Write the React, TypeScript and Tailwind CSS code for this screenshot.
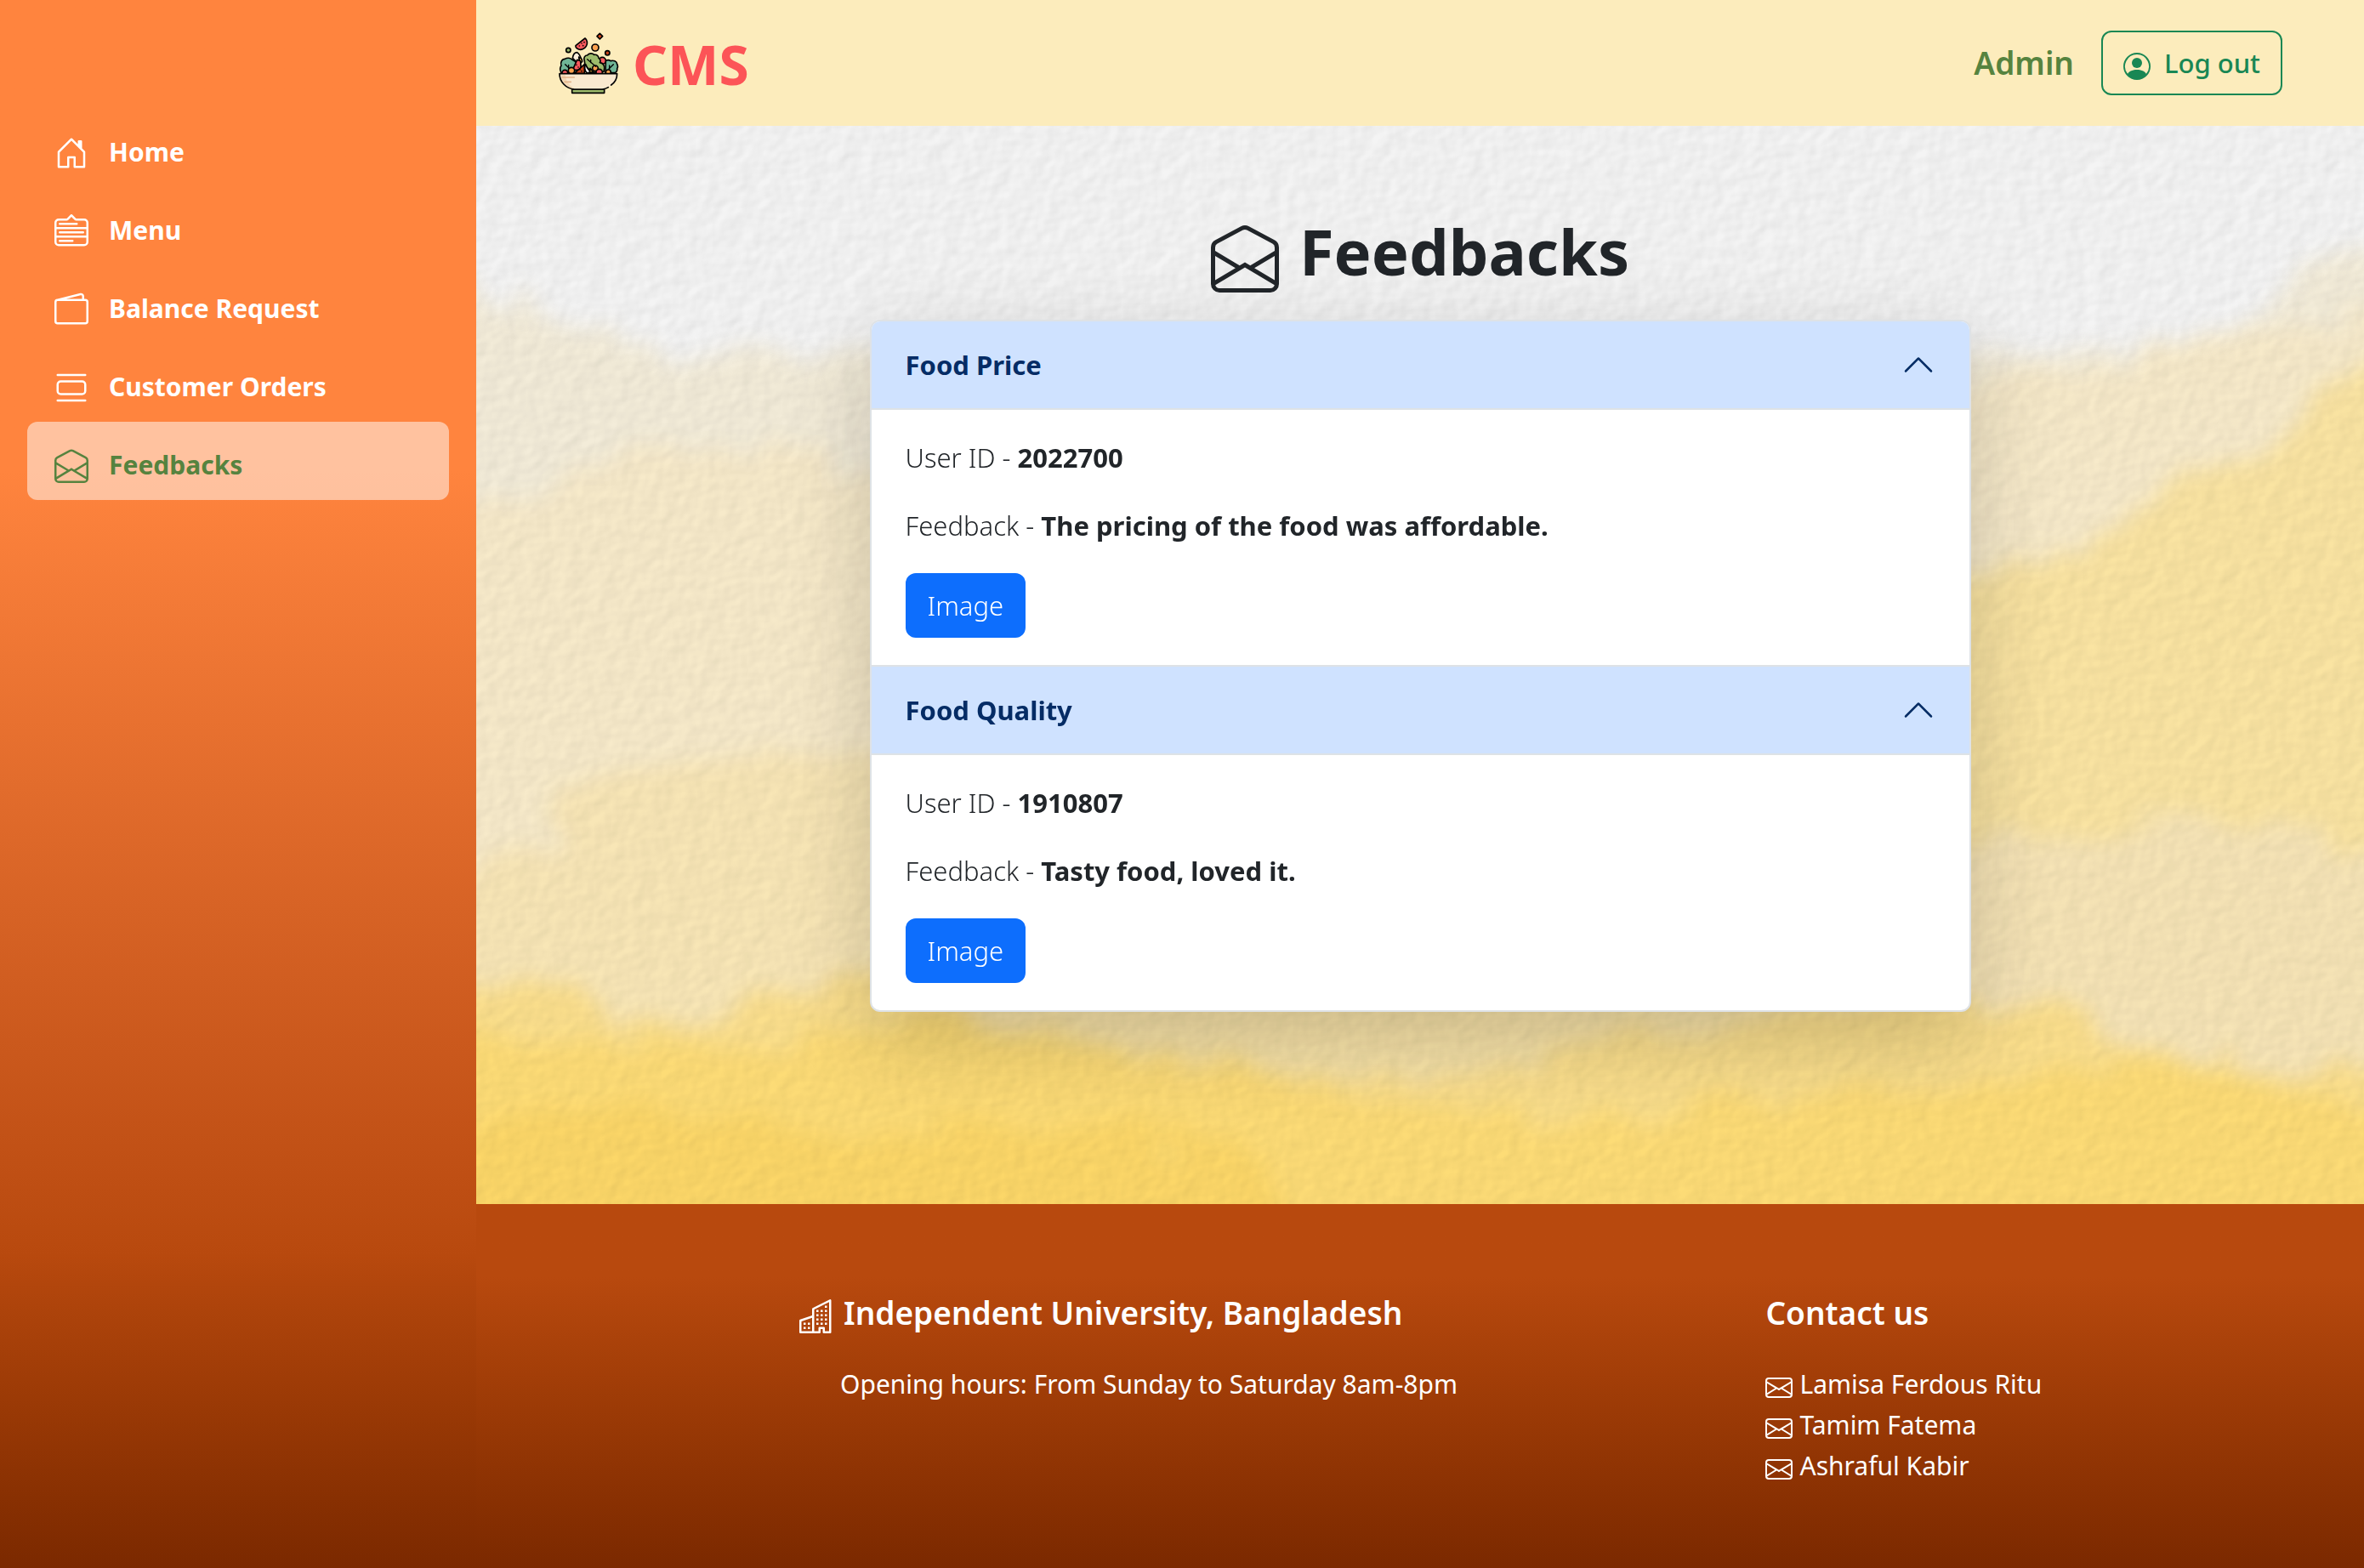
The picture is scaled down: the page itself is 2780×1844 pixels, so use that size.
import { useState } from "react";
import type { ReactNode } from "react";
import type { IconType } from "react-icons";
import {
  BsBuildings,
  BsChevronUp,
  BsEnvelope,
  BsEnvelopeOpen,
  BsMenuDown,
  BsPersonCircle,
  BsWallet2,
} from "react-icons/bs";

function OrdersIcon({ className }: { className?: string }) {
  return (
    <svg viewBox="0 0 16 16" fill="currentColor" className={className} aria-hidden="true">
      <path d="M3 4.5h10a2 2 0 0 1 2 2v3a2 2 0 0 1-2 2H3a2 2 0 0 1-2-2v-3a2 2 0 0 1 2-2m0 1a1 1 0 0 0-1 1v3a1 1 0 0 0 1 1h10a1 1 0 0 0 1-1v-3a1 1 0 0 0-1-1zM1 2a.5.5 0 0 1 .5-.5h13a.5.5 0 0 1 0 1h-13A.5.5 0 0 1 1 2m0 12a.5.5 0 0 1 .5-.5h13a.5.5 0 0 1 0 1h-13A.5.5 0 0 1 1 14" />
    </svg>
  );
}

function HomeIcon({ className }: { className?: string }) {
  return (
    <svg viewBox="0 0 16 16" fill="currentColor" className={className} aria-hidden="true">
      <path d="M8.354 1.146a.5.5 0 0 0-.708 0l-6 6A.5.5 0 0 0 1.5 7.5v7a.5.5 0 0 0 .5.5h4.5a.5.5 0 0 0 .5-.5v-4h2v4a.5.5 0 0 0 .5.5H14a.5.5 0 0 0 .5-.5v-7a.5.5 0 0 0-.146-.354L13 5.793V2.5a.5.5 0 0 0-.5-.5h-1a.5.5 0 0 0-.5.5v1.293zM2.5 14V7.707l5.5-5.5 5.5 5.5V14H10v-4a.5.5 0 0 0-.5-.5h-3a.5.5 0 0 0-.5.5v4z" />
    </svg>
  );
}

function SaladLogo() {
  return (
    <svg viewBox="108 110 216 222" className="h-[74px] w-[72px]" aria-hidden="true">
      <g stroke="#000" strokeWidth="5" strokeLinejoin="round" strokeLinecap="round">
        <path d="M256 117l10 10-10 10-10-10z" fill="#d8481c" />
        <path d="M204 134c8 6 10 18 4 28s-18 14-26 11-12-8-11-13z" fill="#fc5a5f" />
        <circle cx="145" cy="176" r="8" fill="#9dbb6c" />
        <circle cx="240" cy="167" r="12" fill="#fba04e" />
        <circle cx="283" cy="186" r="8" fill="#c8431a" />
        <path d="M120 256c-5-10-4-20 0-25-4-12 2-24 13-24 9-6 20-3 25 2l14 8 4 40z" fill="#6fb596" />
        <path d="M277 214c6-4 14-2 17 0 10-3 22 0 23 11 3 6 3 12 0 16 2 8-4 15-11 15h-30z" fill="#6fb596" />
        <path d="M160 204c2-12 9-20 16-20 6 4 12 14 14 24l-12 14z" fill="#fcefdc" />
        <path d="M182 200c6 2 12 8 12 16l-8 8z" fill="#fbc04a" />
        <circle cx="265" cy="213" r="12" fill="#fc5a5f" />
        <path d="M202 214c-5-12 2-20 10-20 6-8 18-8 24-2 10-2 16 6 16 12 8 5 7 12 4 16 12 1 18 12 16 22l-2 10-40 4-26-26z" fill="#9dbb6c" />
        <path d="M176 210l-16 36h30l-2-32z" fill="#fc5a5f" />
        <path d="M202 226v32h-36z" fill="#c8431a" />
        <path d="M206 226c-5 8-4 22 4 30h24c-14-4-22-14-28-30z" fill="#fff" />
        <path d="M222 240l12 14h-14z" fill="#fbc04a" />
        <circle cx="240" cy="240" r="10" fill="#fba04e" />
        <circle cx="254" cy="254" r="11" fill="#fc5a5f" />
        <circle cx="133" cy="256" r="10" fill="#fc5a5f" />
        <circle cx="156" cy="248" r="11" fill="#fba04e" />
        <circle cx="286" cy="254" r="9" fill="#fba04e" />
        <path d="M134 226l14 14m-2-12v12M212 208l30 26m-18-24v10M304 226l-16 16m2-12v12" fill="none" strokeWidth="4" />
        <path d="M158 314h114v13H158z" fill="#9dbb6c" />
        <path d="M114 259h203c0 26-20 50-52 55H166c-32-5-52-29-52-55z" fill="#fae9d0" stroke="none" />
        <path d="M118 262h16c2 20 12 38 34 50-30-4-50-26-50-50z" fill="#f3d8b4" stroke="none" />
        <path d="M124 272h42M132 288h22" stroke="#e3b48a" />
        <path d="M296 299c14-10 21-24 21-40H114c0 28 22 52 52 55h99c8-1 15-3 21-7" fill="none" />
      </g>
      <g fill="#000">
        <circle cx="192" cy="152" r="2.5" />
        <circle cx="201" cy="148" r="2.5" />
        <circle cx="184" cy="161" r="2.5" />
        <circle cx="197" cy="160" r="2.5" />
        <circle cx="174" cy="228" r="2.5" />
        <circle cx="180" cy="236" r="2.5" />
        <circle cx="186" cy="244" r="2.5" />
        <circle cx="192" cy="250" r="2.5" />
      </g>
    </svg>
  );
}

function WatercolorPaper() {
  return (
    <svg
      viewBox="0 0 2220 1268"
      preserveAspectRatio="none"
      className="absolute inset-0 size-full"
      aria-hidden="true"
    >
      <defs>
        <filter id="wash" x="-5%" y="-5%" width="110%" height="110%" colorInterpolationFilters="sRGB">
          <feTurbulence type="fractalNoise" baseFrequency="0.012 0.02" numOctaves="4" seed="7" result="n" />
          <feDisplacementMap in="SourceGraphic" in2="n" scale="70" xChannelSelector="R" yChannelSelector="G" />
          <feGaussianBlur stdDeviation="12" />
        </filter>
        <filter id="grain" x="0" y="0" width="100%" height="100%" colorInterpolationFilters="sRGB">
          <feTurbulence type="fractalNoise" baseFrequency="0.05 0.06" numOctaves="2" seed="3" />
          <feColorMatrix values="0 0 0 0 0  0 0 0 0 0  0 0 0 0 0  1 0 0 0 0" />
          <feDiffuseLighting surfaceScale="0.4" diffuseConstant="1.13" lightingColor="#ffffff">
            <feDistantLight azimuth="215" elevation="60" />
          </feDiffuseLighting>
        </filter>
      </defs>
      <rect width="2220" height="1268" fill="#f4f4f4" />
      <g filter="url(#wash)">
        <path fill="#f3ecd9" d="M-60 190L85 208l56 33 114 33 99-22 113 33 300 60h700l288-70 114-12 113-4 99-12 14-34 57-39 140-50V1340H-60z" />
        <path fill="#f7eaca" d="M-60 445l110-5 134-54 150-10 200 50h1000l230-120 180-30 140-40 196-30V1340H-60z" />
        <path fill="#fae4a2" d="M2290 265l-70 20-68 45-42 55-100 12-42 44-71 56-127 11-170 40-200 200v330h440l440-60z" />
        <path fill="#f8e6b6" d="M-60 885l60-10 113-33-28-45 127-44 213-23 300 40v400H-60z" />
        <path fill="#f6e4b6" d="M2290 840l-70 12-130-32-50-20-100 30-120 0-80 30-100 40-400 60v280h1050z" />
        <path fill="#f8e3a8" d="M300 1030l300-70 500 20 500-20v200H300z" />
        <path fill="#fbdf8c" d="M-60 1018l60-4 141 4 22 50 92-4 99-45 113-22 120 50 404 71 227-10 212-44 212-34 198 0 114 45 99 33 240 11v240H-60z" />
        <path fill="#fddc76" d="M-60 1060l220 20 200 0 200-30 300 60 360 60 400-40 400-30 260 70v170H-60z" />
        <path fill="#fcd768" d="M-60 1190l200-40 300 40 300-20 200 50v120H-60z" />
      </g>
      <rect width="2220" height="1268" filter="url(#grain)" className="mix-blend-multiply" />
    </svg>
  );
}

type Icon = IconType | ((props: { className?: string }) => ReactNode);

const links: { label: string; icon: Icon; active?: boolean }[] = [
  { label: "Home", icon: HomeIcon },
  { label: "Menu", icon: BsMenuDown },
  { label: "Balance Request", icon: BsWallet2 },
  { label: "Customer Orders", icon: OrdersIcon },
  { label: "Feedbacks", icon: BsEnvelopeOpen, active: true },
];

const feedbacks = [
  { title: "Food Price", user: "2022700", text: "The pricing of the food was affordable." },
  { title: "Food Quality", user: "1910807", text: "Tasty food, loved it." },
];

const contacts = ["Lamisa Ferdous Ritu", "Tamim Fatema", "Ashraful Kabir"];

function FeedbackItem({ title, user, text }: { title: string; user: string; text: string }) {
  const [open, setOpen] = useState(true);
  return (
    <section className="border-t-2 border-[#dee2e6] first:border-t-0">
      <h2>
        <button
          type="button"
          aria-expanded={open}
          onClick={() => setOpen(!open)}
          className="flex h-[104px] w-full items-center justify-between border-b-2 border-[#dee2e6] bg-[#cfe2ff] px-10 text-[31px] font-bold text-[#052c65]"
        >
          {title}
          <BsChevronUp className={open ? "size-10" : "size-10 rotate-180"} />
        </button>
      </h2>
      {open && (
        <div className="px-10 py-8 text-[31px] leading-[48px] font-light">
          <p className="mb-8">
            User ID - <strong className="font-bold">{user}</strong>
          </p>
          <p className="mb-8">
            Feedback - <strong className="font-bold">{text}</strong>
          </p>
          <button type="button" className="block h-[76px] rounded-xl bg-[#0d6efd] px-[26px] text-white">
            Image
          </button>
        </div>
      )}
    </section>
  );
}

export default function App() {
  return (
    <div className="flex min-h-screen font-['Noto_Sans',sans-serif] text-[#212529]">
      <aside className="w-[560px] shrink-0 bg-linear-to-b from-[#ff843e] from-30% via-[#b8490e] via-80% to-[#7b2900] px-8 pt-32">
        <nav>
          {links.map(({ label, icon: LinkIcon, active }) => (
            <a
              key={label}
              href="#"
              aria-current={active ? "page" : undefined}
              className={
                active
                  ? "flex h-[92px] items-center gap-6 rounded-xl bg-white/50 px-8 text-[30px] font-bold text-[#56833f]"
                  : "flex h-[92px] items-center gap-6 rounded-xl px-8 text-[30px] font-bold text-white"
              }
            >
              <LinkIcon className="mt-3 size-10 shrink-0" />
              <span className="pt-2">{label}</span>
            </a>
          ))}
        </nav>
      </aside>

      <div className="flex min-w-0 flex-1 flex-col">
        <header className="flex h-[148px] items-center justify-between bg-[#fcecbc] px-24">
          <a href="#" className="flex items-center gap-4 text-[64px] leading-[80px] font-bold text-[#fc5457]">
            <SaladLogo />
            <span className="pt-1">CMS</span>
          </a>
          <div className="flex items-center gap-8">
            <span className="text-[37px] leading-[48px] font-semibold text-[#56833f]">Admin</span>
            <button
              type="button"
              className="flex h-[76px] items-center gap-4 rounded-xl border-2 border-[#198754] px-6 text-[31px] font-medium text-[#198754]"
            >
              <BsPersonCircle className="mt-2 size-8" />
              Log out
            </button>
          </div>
        </header>

        <main className="relative isolate flex-1 pt-24 pb-[226px]">
          <WatercolorPaper />
          <h1 className="relative mb-9 flex h-24 items-center justify-center gap-6 text-[74px] leading-[96px] font-bold">
            <BsEnvelopeOpen className="mt-6 size-20 shrink-0" />
            <span className="pt-2">Feedbacks</span>
          </h1>
          <div className="relative mx-auto w-7/12 overflow-hidden rounded-xl border-2 border-[#dee2e6] bg-white shadow-[0_32px_96px_rgba(0,0,0,0.175)]">
            {feedbacks.map((item) => (
              <FeedbackItem key={item.title} {...item} />
            ))}
          </div>
        </main>

        <footer className="grid grid-cols-[21fr_13fr] bg-linear-to-b from-[#b8490e] from-20% to-[#7b2900] pt-[104px] pb-24 pl-[380px] text-[30px] leading-[48px] text-white">
          <div>
            <h2 className="mb-9 flex h-12 items-center gap-3 text-[37px] font-semibold">
              <BsBuildings className="mt-2 size-10 shrink-0" />
              Independent University, Bangladesh
            </h2>
            <p className="pl-12">Opening hours: From Sunday to Saturday 8am-8pm</p>
          </div>
          <div>
            <h2 className="mb-9 text-[37px] font-semibold">Contact us</h2>
            <ul>
              {contacts.map((name) => (
                <li key={name} className="flex items-center gap-2">
                  <BsEnvelope className="mt-2 size-8 shrink-0" />
                  {name}
                </li>
              ))}
            </ul>
          </div>
        </footer>
      </div>
    </div>
  );
}
